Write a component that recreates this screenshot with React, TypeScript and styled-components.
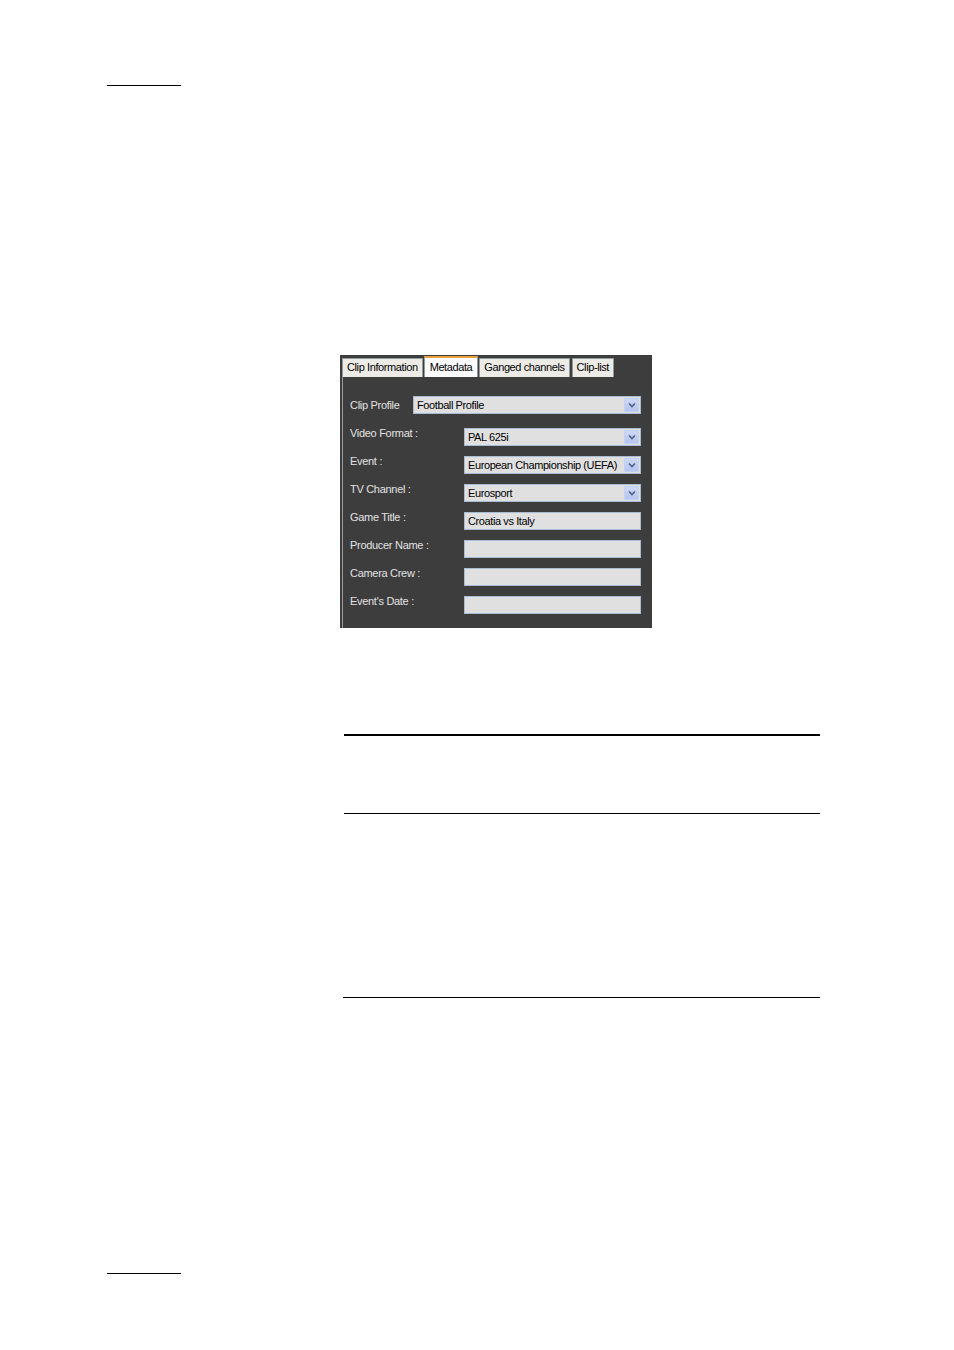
import React from 'react'
import styled, { createGlobalStyle } from 'styled-components'

const GlobalStyle = createGlobalStyle`
  html, body {
    margin: 0;
    padding: 0;
    background: #ffffff;
  }
  body {
    font-family: "Liberation Sans", Arial, sans-serif;
  }`

const Page = styled.div`
  width: 954px;
  height: 1350px;
  display: flex;
  flex-direction: column;
  background: #ffffff;
  overflow: hidden;`

const HeaderRule = styled.div<{ $top: number }>`
  margin-top: ${(p) => p.$top}px;
  margin-left: 107px;
  width: 74px;
  border-top: 1px solid #000;`

const Shot = styled.div`
  margin-top: 269px;
  margin-left: 340px;
  width: 312px;
  height: 273px;
  background: #3d3d3d;
  display: flex;
  flex-direction: column;`

const TabStrip = styled.div`
  height: 22px;
  display: flex;
  align-items: flex-end;
  padding-left: 2px;
  gap: 2px;`

const Tab = styled.div<{ $active?: boolean }>`
  box-sizing: border-box;
  height: ${(p) => (p.$active ? 21 : 19)}px;
  padding: ${(p) => (p.$active ? '2px 5px 0' : '1px 4px 0')};
  font-size: 11px;
  letter-spacing: -0.4px;
  line-height: 15px;
  color: #000;
  background: ${(p) => (p.$active ? '#fcfcfe' : '#ecebe6')};
  border: 1px solid #919b9c;
  border-bottom: none;
  border-top: ${(p) => (p.$active ? '2px solid #e8a23c' : '1px solid #919b9c')};
  white-space: nowrap;
  margin-left: ${(p) => (p.$active ? '-1px' : '0')};
  margin-right: ${(p) => (p.$active ? '-1px' : '0')};`

const Panel = styled.div`
  flex: 1;
  border-left: 1px solid #9a9a9a;
  margin-left: 2px;
  padding: 19px 11px 0 7px;
  display: flex;
  flex-direction: column;
  gap: 10px;`

const Row = styled.div<{ $center?: boolean }>`
  display: flex;
  align-items: ${(p) => (p.$center ? 'center' : 'flex-start')};
  height: 18px;
  margin-bottom: ${(p) => (p.$center ? '4px' : '0')};`

const Label = styled.div<{ $width: number }>`
  width: ${(p) => p.$width}px;
  flex-shrink: 0;
  font-size: 11px;
  letter-spacing: -0.3px;
  line-height: 11px;
  color: #e2e2e2;
  white-space: nowrap;`

const Field = styled.div`
  flex: 1;
  min-width: 0;
  overflow: hidden;
  box-sizing: border-box;
  height: 18px;
  display: flex;
  align-items: center;
  background: #e0e0e0;
  border: 1px solid #a9bcd4;
  padding: 0 1px 0 3px;
  font-size: 11px;
  letter-spacing: -0.4px;
  color: #000;
  white-space: nowrap;`

const FieldText = styled.span`
  flex: 1;
  overflow: hidden;`

const DropButton = styled.div`
  width: 15px;
  height: 14px;
  flex-shrink: 0;
  box-sizing: border-box;
  display: flex;
  align-items: center;
  justify-content: center;
  background: linear-gradient(#ccd8f8, #b6c5ef);
  border: 1px solid #c2d0f4;
  border-radius: 1px;`

const Chevron = () => (
  <svg width="8" height="6" viewBox="0 0 8 6">
    <path d="M1 1.5 L4 4.5 L7 1.5" fill="none" stroke="#4d6185" strokeWidth="1.6" />
  </svg>
)

const ThickRule = styled.div<{ $top: number; $weight: number; $left: number }>`
  margin-top: ${(p) => p.$top}px;
  margin-left: ${(p) => p.$left}px;
  width: ${(p) => 820 - p.$left}px;
  border-top: ${(p) => p.$weight}px solid #000;`

interface FieldRow {
  label: string
  value: string
  combo?: boolean
}

const rows: FieldRow[] = [
  { label: 'Video Format :', value: 'PAL 625i', combo: true },
  { label: 'Event :', value: 'European Championship (UEFA)', combo: true },
  { label: 'TV Channel :', value: 'Eurosport', combo: true },
  { label: 'Game Title :', value: 'Croatia vs Italy' },
  { label: 'Producer Name :', value: '' },
  { label: 'Camera Crew :', value: '' },
  { label: "Event's Date :", value: '' },
]

const App: React.FC = () => {
  return (
    <Page>
      <GlobalStyle />
      <HeaderRule $top={85} />
      <Shot>
        <TabStrip>
          <Tab>Clip Information</Tab>
          <Tab $active>Metadata</Tab>
          <Tab>Ganged channels</Tab>
          <Tab>Clip-list</Tab>
        </TabStrip>
        <Panel>
          <Row $center>
            <Label $width={63}>Clip Profile</Label>
            <Field>
              <FieldText>Football Profile</FieldText>
              <DropButton><Chevron /></DropButton>
            </Field>
          </Row>
          {rows.map((r) => (
            <Row key={r.label}>
              <Label $width={114}>{r.label}</Label>
              <Field>
                <FieldText>{r.value}</FieldText>
                {r.combo && <DropButton><Chevron /></DropButton>}
              </Field>
            </Row>
          ))}
        </Panel>
      </Shot>
      <ThickRule $top={106} $weight={2} $left={344} />
      <ThickRule $top={77} $weight={1} $left={344} />
      <ThickRule $top={183} $weight={1} $left={343} />
      <HeaderRule $top={275} />
    </Page>
  )
}

export default App
